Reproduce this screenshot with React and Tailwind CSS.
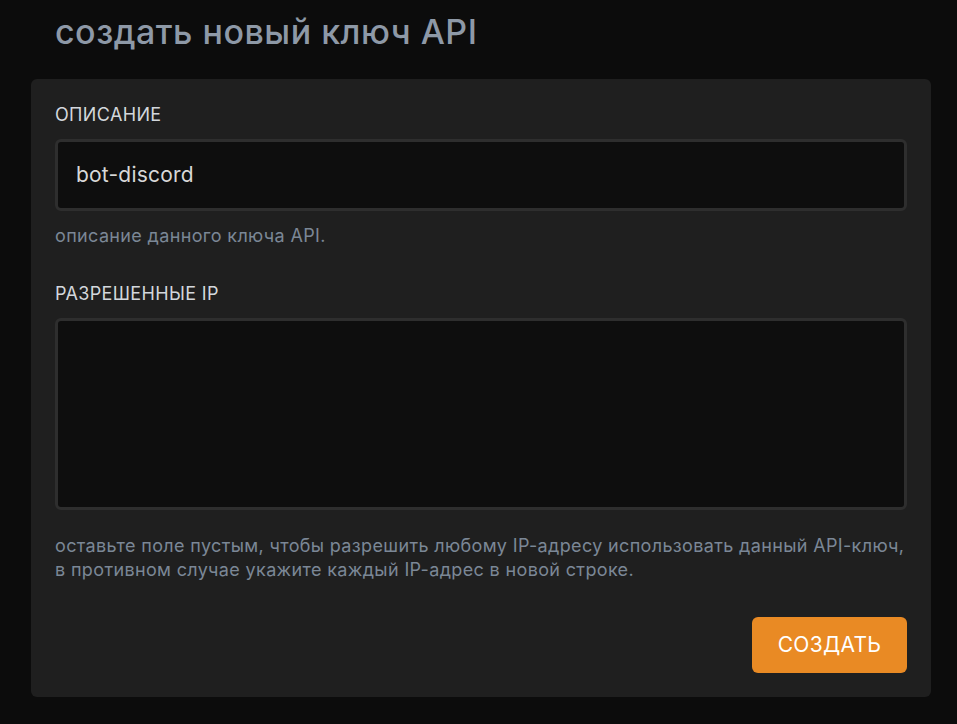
export default function App() {
  return (
    <div className="min-h-screen bg-[#0c0c0c] px-[31px] font-['Inter','Noto_Sans',sans-serif]">
      <h1 className="pl-6 pt-[10px] text-[34px] font-medium leading-[44px] tracking-[0.5px] text-[#8e99a7]">
        создать новый ключ API
      </h1>
      <div className="mt-[25px] w-[900px] rounded-md bg-[#1f1f1f] px-6 pb-6 pt-[22px]">
        <label className="block text-[18px] leading-[28px] tracking-[0.35px] text-[#d3d7dc]">ОПИСАНИЕ</label>
        <div className="mt-[10px] flex h-[72px] items-center rounded-md border-[3px] border-[#2e2e2e] bg-[#0e0e0e] px-[18px] text-[21px] tracking-[0.2px] text-[#d8d8d8]">
          bot-discord
        </div>
        <p className="mt-[12px] text-[18px] leading-[26px] tracking-[0.35px] text-[#7b8796]">описание данного ключа API.</p>
        <label className="mt-[31px] block text-[18px] leading-[28px] tracking-[0.35px] text-[#d3d7dc]">РАЗРЕШЕННЫЕ IP</label>
        <div className="mt-[10px] h-[192px] rounded-md border-[3px] border-[#2e2e2e] bg-[#0e0e0e]" />
        <p className="mt-[24px] text-[18px] leading-[24px] tracking-[0.35px] text-[#7b8796]">
          оставьте поле пустым, чтобы разрешить любому IP-адресу использовать данный API-ключ,
          <br />
          в противном случае укажите каждый IP-адрес в новой строке.
        </p>
        <div className="mt-[35px] flex justify-end">
          <button className="h-[56px] w-[155px] rounded-md bg-[#e98a24] text-[21px] tracking-[0.3px] text-white">
            СОЗДАТЬ
          </button>
        </div>
      </div>
    </div>
  );
}
